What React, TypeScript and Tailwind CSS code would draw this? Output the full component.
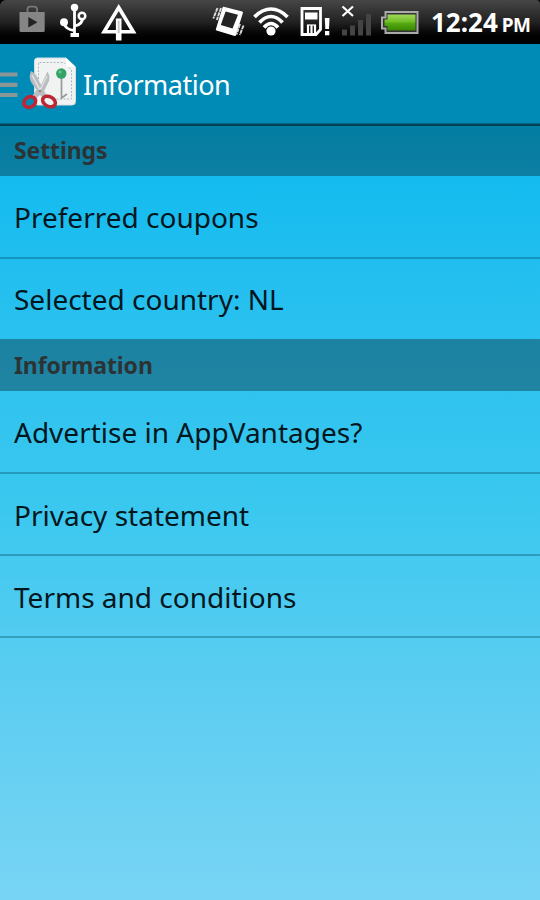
import React from "react";

function NotificationIcons() {
  return (
    <svg width="150" height="44" viewBox="0 0 150 44" fill="none" className="shrink-0">
      <path d="M0 0H5Q1 1 0 5Z" fill="#000" />
      {/* store bag */}
      <path d="M27.500 13V9.500Q27.500 6.700 30 6.700H34.500Q37 6.700 37 9.500V13" stroke="#777" strokeWidth="1.800" />
      <path d="M19.500 12H44.700V30.500Q44.700 32 43.200 32H21Q19.500 32 19.500 30.500Z" fill="#858585" />
      <path d="M28.300 17L37.500 22.300L28.300 27.500Z" fill="#222" />
      {/* usb */}
      <g stroke="#fff" strokeWidth="2.800">
        <path d="M74.500 8V35M64 23Q65.500 29.500 74 30.500M82.500 17Q83 24 75 26" />
      </g>
      <circle cx="74.500" cy="7.500" r="3.700" fill="#fff" />
      <circle cx="64" cy="22.300" r="4" fill="#fff" />
      <circle cx="82" cy="16" r="3.300" fill="#333" stroke="#fff" strokeWidth="2.500" />
      <path d="M70.500 35H79" stroke="#fff" strokeWidth="4" />
      {/* triangle */}
      <path d="M118.700 7.500L133.300 31.800H104.100Z" stroke="#fff" strokeWidth="3.600" />
      <path d="M118.700 18.500V40.500" stroke="#fff" strokeWidth="5.600" />
      <path d="M118.700 20.500V33" stroke="#ccc" strokeWidth="2" />
    </svg>
  );
}

function SystemIcons() {
  return (
    <svg width="225" height="44" viewBox="200 0 225 44" fill="none" className="shrink-0">
      {/* vibrating phone */}
      <path d="M223.500 7.800L242 12.500L235 35L216.800 29.500Z" fill="#fff" stroke="#fff" strokeWidth="2" strokeLinejoin="round" />
      <path d="M225.600 11.500L238 14.800L232.500 28.500L220.800 25Z" fill="#242424" />
      <path d="M217.500 8L213.300 18.500M221 8L216.800 20M240 24L236.500 34.500M243.500 25.500L239.800 35" stroke="#ddd" strokeWidth="1.900" strokeDasharray="4 0.700" />
      {/* wifi */}
      <g stroke="#fff" strokeWidth="3.700">
        <path d="M254.500 17Q262.300 9 271 9T287.500 17" />
        <path d="M259.500 22.500Q265 16.500 271 16.500T282.500 22.500" />
        <path d="M264 27.500Q267.500 23.500 271 23.500T278 27.500" />
      </g>
      <circle cx="271" cy="31" r="4.600" fill="#fff" />
      {/* storage card */}
      <path d="M302 8.500H320.500V29.500L316 34.500H302Z" stroke="#fff" strokeWidth="2.800" />
      <path d="M305 12.500H317.500V19.500H305Z" fill="#fff" />
      <path d="M308 25V34M311.500 25V34M315 25V33" stroke="#fff" strokeWidth="2.200" />
      <path d="M307 25H316" stroke="#fff" strokeWidth="1.200" />
      <path d="M324.800 18H329.500L329 29H325.300Z" fill="#fff" />
      <rect x="325" y="31" width="4.300" height="4.300" fill="#fff" />
      {/* signal */}
      <path d="M342.500 6.500L353 16M353 6.500L342.500 16" stroke="#fff" strokeWidth="2.200" />
      <path d="M342 29.500H347V35.500H342ZM350 25.500H355V35.500H350ZM358 20H363V35.500H358ZM366 14H371V35.500H366Z" fill="#444" />
      {/* battery */}
      <path d="M385.500 12H417.500V33H385.500V28.500H382V17.500H385.500Z" fill="#333" stroke="#aaa" strokeWidth="2" />
      <path d="M387.500 14.500H415.500V30.500H387.500V26H384.500V19.500H387.500Z" fill="url(#battery)" />
      <defs>
        <linearGradient id="battery" x1="0" y1="0" x2="0" y2="1">
          <stop stopColor="#a2d85c" />
          <stop offset=".45" stopColor="#70bf26" />
          <stop offset=".55" stopColor="#55aa11" />
          <stop offset="1" stopColor="#388802" />
        </linearGradient>
      </defs>
    </svg>
  );
}

function AppLogo() {
  return (
    <svg width="80" height="80" viewBox="0 44 80 80" fill="none" className="shrink-0">
      <path d="M0 74.500H17.500M0 84.800H17.500M0 95H17.500" stroke="#8b9697" strokeWidth="4.200" />
      <path d="M37.500 58H66L75.500 67V101.500Q75.500 105 72 105H38Q34.500 105 34.500 101.500V61Q34.500 58 37.500 58Z" fill="#f1f3f3" stroke="#d6e0e2" />
      <path d="M38.500 93V62.500H64L71.500 70V99H55" stroke="#a9b8c5" strokeWidth="1" strokeDasharray="2 1.500" />
      <path d="M66 58V67H75.500Z" fill="#fff" />
      <path d="M61.500 75V98L67 94" stroke="#999" strokeWidth="1.700" />
      <circle cx="61.300" cy="73.500" r="5.200" fill="#35a265" />
      <circle cx="60" cy="72" r="1.800" fill="#66bf8a" />
      <path d="M31 71Q37 74 39 81L41 85L47.500 71.500Q51.500 78 47.500 84L44 91L48 97L44 99L40 95L35 99L31.500 97L36.500 90L31 82Q28.500 77 31 71Z" fill="#babdbf" />
      <path d="M32 75L40 90L47 76" stroke="#dddfe0" strokeWidth="1.600" />
      <circle cx="40" cy="91" r="1.300" fill="#888" />
      <ellipse cx="29.800" cy="102" rx="6.200" ry="5" transform="rotate(-32 29.800 102)" stroke="#bc2734" strokeWidth="3.600" />
      <ellipse cx="49" cy="101.500" rx="6.800" ry="4.800" transform="rotate(28 49 101.500)" stroke="#bc2734" strokeWidth="3.600" />
    </svg>
  );
}

function Section({ children }: { children: React.ReactNode }) {
  return (
    <h2 className="flex h-[52px] items-center bg-black/32 pl-3.5 text-[23px] font-bold leading-[50px] tracking-[-0.1px] text-[#2c3335]">
      {children}
    </h2>
  );
}

function Row({ children }: { children: React.ReactNode }) {
  return (
    <li className="flex h-[82px] items-center border-b-2 border-[#00465f]/35 pl-3.5 pt-px text-[28px] leading-none text-[#02161d] first:h-[83px]">
      {children}
    </li>
  );
}

export default function App() {
  return (
    <div className="flex h-[900px] w-[540px] flex-col overflow-hidden bg-black font-['Noto_Sans','Open_Sans',sans-serif]">
      <header className="flex h-11 shrink-0 items-center rounded-tr bg-linear-to-b from-[#474747] via-[#222] to-black text-white">
        <NotificationIcons />
        <div className="w-[50px]" />
        <SystemIcons />
        <div className="ml-[6px] flex items-baseline whitespace-nowrap font-bold leading-none">
          <span className="text-[26px]">12:24</span>
          <span className="ml-1 text-[19px] tracking-[-0.5px]">PM</span>
        </div>
      </header>
      <div className="flex h-[82px] shrink-0 items-center border-b-[3px] border-[#006480] bg-[#008bb7]">
        <AppLogo />
        <h1 className="ml-[3px] pt-px text-[27px] leading-none tracking-[-0.5px] text-white">Information</h1>
      </div>
      <main className="flex-1 bg-linear-to-b from-[#05b9ef] via-[#3bc8ef] to-[#78d4f4]">
        <div className="-mt-0.5">
          <Section>Settings</Section>
        </div>
        <ul>
          <Row>Preferred coupons</Row>
          <li className="flex h-20 items-center pl-3.5 text-[28px] leading-none text-[#02161d]">
            Selected country: NL
          </li>
        </ul>
        <Section>Information</Section>
        <ul>
          <Row>Advertise in AppVantages?</Row>
          <Row>Privacy statement</Row>
          <Row>Terms and conditions</Row>
        </ul>
      </main>
    </div>
  );
}
